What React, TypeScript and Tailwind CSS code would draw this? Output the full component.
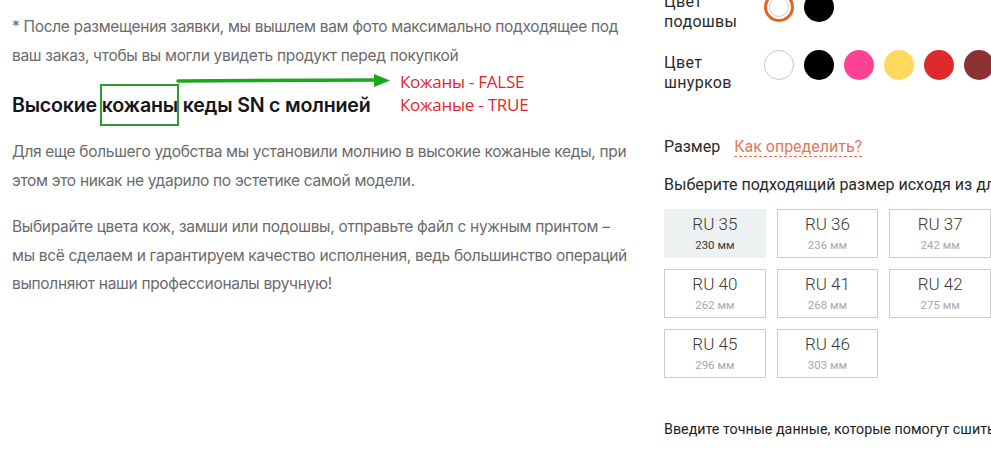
import React from "react";

const SIZES = [
  { ru: "RU 35", mm: "230 мм", active: true },
  { ru: "RU 36", mm: "236 мм" },
  { ru: "RU 37", mm: "242 мм" },
  { ru: "RU 40", mm: "262 мм" },
  { ru: "RU 41", mm: "268 мм" },
  { ru: "RU 42", mm: "275 мм" },
  { ru: "RU 45", mm: "296 мм" },
  { ru: "RU 46", mm: "303 мм" },
];

const LACE_COLORS = ["bg-white border border-[#c8c8c8]", "bg-black", "bg-[#fd4195]", "bg-[#ffd95c]", "bg-[#dd2a2a]", "bg-[#8c3232]"];

function Swatch({ className }: { className: string }) {
  return <span className={`block h-[30px] w-[30px] shrink-0 rounded-full ${className}`} />;
}

export default function App() {
  return (
    <div className="relative flex h-[458px] w-[991px] overflow-hidden bg-white">
      {/* Описание */}
      <div className="relative w-[652px] shrink-0 pl-3 pt-[13px] font-['Inter',sans-serif] text-[15.5px] leading-[28.5px] tracking-[-0.02em] text-[#6b6b6b]">
        <p>
          * После размещения заявки, мы вышлем вам фото максимально подходящее под
          <br />
          ваш заказ, чтобы вы могли увидеть продукт перед покупкой
        </p>
        <h2 className="mt-[21px] text-[19.6px] font-semibold leading-[28px] tracking-[-0.01em] text-[#161616]">
          Высокие{" "}
          <span className="relative">
            кожаны
            <span className="absolute -bottom-[9px] -left-[2px] -right-[1px] -top-[9px] border-2 border-[#2e9a35]" />
          </span>{" "}
          кеды SN с молнией
        </h2>
        <p className="mt-[19px]">
          Для еще большего удобства мы установили молнию в высокие кожаные кеды, при
          <br />
          этом это никак не ударило по эстетике самой модели.
        </p>
        <p className="mt-[18px]">
          Выбирайте цвета кож, замши или подошвы, отправьте файл с нужным принтом –
          <br />
          мы всё сделаем и гарантируем качество исполнения, ведь большинство операций
          <br />
          выполняют наши профессионалы вручную!
        </p>

        {/* пометка */}
        <svg className="absolute left-[176px] top-[73px]" width="216" height="16" viewBox="0 0 216 16">
          <line x1="2" y1="8" x2="200" y2="7" stroke="#18a818" strokeWidth="3.5" strokeLinecap="round" />
          <path d="M198 1 L214 7.5 L198 14 Z" fill="#18a818" />
        </svg>
        <div className="absolute left-[400px] top-[70px] font-['Open_Sans',sans-serif] text-[17px] leading-[23px] tracking-[-0.015em] text-[#e5262c]">
          <div>Кожаны - FALSE</div>
          <div>Кожаные - TRUE</div>
        </div>
      </div>

      {/* Параметры */}
      <div className="-mt-[12px] ml-3 w-[340px] shrink-0 font-['Roboto',sans-serif] text-[#2a2a2a]">
        <div className="flex items-start">
          <div className="w-[100px] pt-[4px] text-[16px] leading-[20px] tracking-[0.02em]">
            Цвет
            <br />
            подошвы
          </div>
          <div className="flex gap-[10px] pt-[4px]">
            <span className="flex h-[30px] w-[30px] items-center justify-center rounded-full border-[3px] border-[#e2621e]">
              <span className="block h-[20px] w-[20px] rounded-full border border-[#cfcfcf] bg-white" />
            </span>
            <Swatch className="bg-black" />
          </div>
        </div>

        <div className="mt-[12px] flex items-start">
          <div className="w-[100px] pt-[9px] text-[16px] leading-[20px] tracking-[0.02em]">
            Цвет
            <br />
            шнурков
          </div>
          <div className="flex gap-[10px] pt-[6px]">
            {LACE_COLORS.map((c) => (
              <Swatch key={c} className={c} />
            ))}
          </div>
        </div>

        <div className="mt-[43px] flex items-baseline gap-[14px] text-[16px] leading-[22px]">
          <span>Размер</span>
          <span className="border-b border-dashed border-[#e2785a] leading-[19px] text-[#e2785a]">Как определить?</span>
        </div>

        <p className="mt-[16px] whitespace-nowrap text-[16px] leading-[22px] text-[#2a2a2a]">
          Выберите подходящий размер исходя из длины стопы
        </p>

        <div className="mt-[13px] grid w-[327px] grid-cols-3 gap-x-[11px] gap-y-[11px]">
          {SIZES.map((s) => (
            <div
              key={s.ru}
              className={`flex h-[49px] flex-col items-center justify-center gap-[6px] border ${
                s.active ? "border-[#eef1f1] bg-[#eef1f1]" : "border-[#cccccc] bg-white"
              }`}
            >
              <span className="text-[17px] font-light leading-[17px] text-[#3a3a3a]">{s.ru}</span>
              <span className={`text-[11.5px] leading-[12px] ${s.active ? "text-[#3a3a3a]" : "text-[#a8a8a8]"}`}>{s.mm}</span>
            </div>
          ))}
        </div>

        <p className="mt-[41px] whitespace-nowrap text-[14.3px] leading-[20px] text-[#1e1e1e]">
          Введите точные данные, которые помогут сшить строго по ноге
        </p>
      </div>
    </div>
  );
}
